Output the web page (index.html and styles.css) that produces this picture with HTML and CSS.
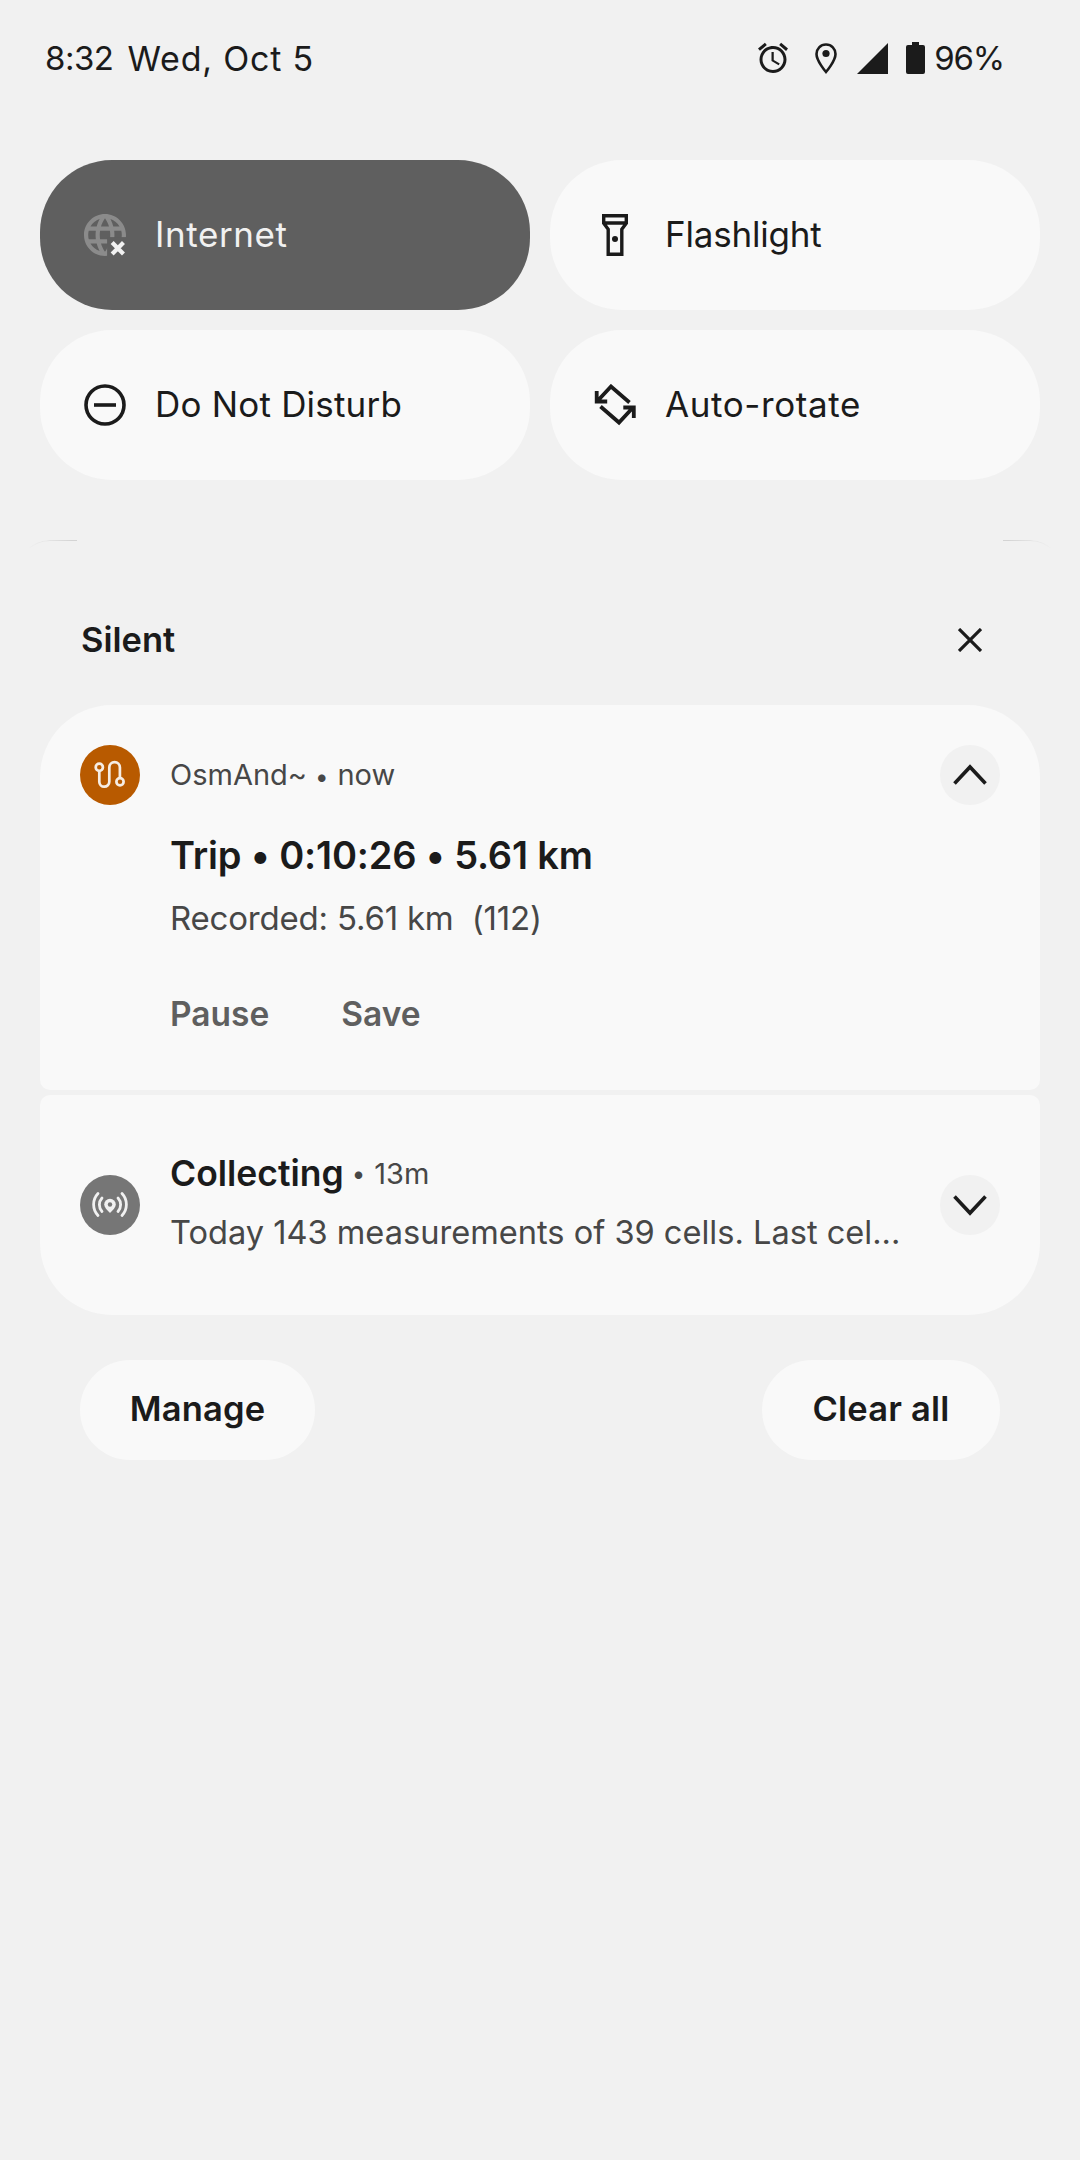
FILE: index.html
```html
<!DOCTYPE html>
<html lang="en">
<head>
    <meta charset="UTF-8">
    <meta name="viewport" content="width=device-width, initial-scale=1.0">
    <title>Notification shade</title>
    <link rel="stylesheet" href="styles.css">
</head>
<body>
    <div class="status-bar">
        <div class="status-time"><span class="status-clock">8:32</span><span class="status-date">Wed, Oct 5</span></div>
        <div class="status-icons">
            <svg class="ic-alarm" width="30" height="32" viewBox="2 1.8 20 20.4"><path fill="#1b1b1b" d="M22 5.72l-4.6-3.86-1.29 1.53 4.6 3.86L22 5.72zM7.88 3.39L6.6 1.86 2 5.71l1.29 1.53 4.59-3.85zM12.5 8H11v6l4.75 2.85.75-1.23-4-2.37V8zM12 4c-4.97 0-9 4.03-9 9s4.03 9 9 9 9-4.03 9-9-4.03-9-9-9zm0 16c-3.87 0-7-3.13-7-7s3.13-7 7-7 7 3.13 7 7-3.13 7-7 7z"/></svg>
            <svg class="ic-pin" width="22" height="31" viewBox="0 0 22 31"><path fill="none" stroke="#1b1b1b" stroke-width="2.6" d="M11 1.5C5.5 1.5 1.5 5.8 1.5 11c0 7 9.5 18 9.5 18s9.5-11 9.5-18C20.5 5.8 16.5 1.5 11 1.5z"/><circle cx="11" cy="10.5" r="3.6" fill="#1b1b1b"/></svg>
            <svg class="ic-signal" width="31" height="31" viewBox="0 0 31 31"><polygon fill="#1b1b1b" points="0,31 31,0 31,31"/></svg>
            <svg class="ic-battery" width="19" height="32" viewBox="0 0 19 32"><path fill="#1b1b1b" d="M6 0h7v3h4a2 2 0 0 1 2 2v25a2 2 0 0 1-2 2H2a2 2 0 0 1-2-2V5a2 2 0 0 1 2-2h4z"/></svg>
            <span class="status-pct">96%</span>
        </div>
    </div>

    <div class="tiles">
        <div class="tile tile-off">
            <span class="tile-icon">
                <svg width="42" height="42" viewBox="2 2 20 20"><path fill="#8b8b8b" d="M11.99 2C6.47 2 2 6.48 2 12s4.47 10 9.99 10C17.52 22 22 17.52 22 12S17.52 2 11.99 2zm6.93 6h-2.95c-.32-1.25-.78-2.45-1.38-3.56 1.84.63 3.37 1.91 4.33 3.56zM12 4.04c.83 1.2 1.48 2.53 1.91 3.96h-3.82c.43-1.43 1.08-2.76 1.91-3.96zM4.26 14C4.1 13.36 4 12.69 4 12s.1-1.36.26-2h3.38c-.08.66-.14 1.32-.14 2 0 .68.06 1.34.14 2H4.26zm.82 2h2.95c.32 1.25.78 2.45 1.38 3.56-1.84-.63-3.37-1.9-4.33-3.56zm2.95-8H5.08c.96-1.66 2.49-2.93 4.33-3.56C8.81 5.55 8.35 6.75 8.03 8zM12 19.96c-.83-1.2-1.48-2.53-1.91-3.96h3.82c-.43 1.43-1.08 2.76-1.91 3.96zM14.34 14H9.66c-.09-.66-.16-1.32-.16-2 0-.68.07-1.35.16-2h4.68c.09.65.16 1.32.16 2 0 .68-.07 1.34-.16 2zm.25 5.56c.6-1.11 1.06-2.31 1.38-3.56h2.95c-.96 1.65-2.49 2.93-4.33 3.56zM16.36 14c.08-.66.14-1.32.14-2 0-.68-.06-1.34-.14-2h3.38c.16.64.26 1.31.26 2s-.1 1.36-.26 2h-3.38z"/><rect x="13" y="13" width="9" height="9" fill="#5f5f5f"/><path fill="none" stroke="#f1f1f1" stroke-width="2" d="M15.4 15.6l5.4 5.4M20.8 15.6l-5.4 5.4"/></svg>
            </span>
            <span class="tile-label label-wide">Internet</span>
        </div>
        <div class="tile">
            <span class="tile-icon">
                <svg width="26" height="42" viewBox="0 0 26 42"><path fill="none" stroke="#1b1b1b" stroke-width="3.4" d="M1.7 1.7h22.6v7.5l-4.5 6v25.1H6.2V15.2l-4.5-6zM1.7 9h22.6"/><circle cx="13" cy="25" r="3" fill="#1b1b1b"/></svg>
            </span>
            <span class="tile-label label-tight">Flashlight</span>
        </div>
        <div class="tile">
            <span class="tile-icon">
                <svg width="42" height="42" viewBox="0 0 42 42"><circle cx="21" cy="21" r="19" fill="none" stroke="#1b1b1b" stroke-width="3.6"/><path stroke="#1b1b1b" stroke-width="3.6" d="M10 21h22"/></svg>
            </span>
            <span class="tile-label label-dnd">Do Not Disturb</span>
        </div>
        <div class="tile">
            <span class="tile-icon">
                <svg width="42" height="42" viewBox="24 25 42 42"><path fill="none" stroke="#1b1b1b" stroke-width="3.8" d="M27 42.5L41 27.5l18.5 16M30.5 47.5L49 63.5 63 48.5M26.700 32v10.500h10.500M53.300 48.500h10.500V59"/></svg>
            </span>
            <span class="tile-label label-wide">Auto-rotate</span>
        </div>
    </div>

    <div class="shade-edge"><span class="edge-left"></span><span class="edge-right"></span></div>

    <div class="section-head">
        <span class="section-title">Silent</span>
        <svg class="close-icon" width="24" height="24" viewBox="0 0 24 24"><path stroke="#1b1b1b" stroke-width="3.2" d="M1 1l22 22M23 1L1 23"/></svg>
    </div>

    <div class="card card-top">
        <div class="card-row">
            <span class="app-icon app-osmand">
                <svg width="60" height="60" viewBox="0 0 60 60"><g fill="none" stroke="#f6ede4" stroke-width="2.700"><path d="M19.300 26v10.700a5 5 0 0 0 10 0V22.500a5.300 5.300 0 0 1 10.600 0V33"/><circle cx="19.300" cy="22.300" r="3.600"/><circle cx="40" cy="36.700" r="3.600"/></g></svg>
            </span>
            <span class="app-line">OsmAnd~<i class="dot">•</i>now</span>
            <span class="expand">
                <svg width="34" height="22" viewBox="0 0 34 22"><path fill="none" stroke="#1b1b1b" stroke-width="3.600" d="M1.500 19.500L17 3l15.500 16.500"/></svg>
            </span>
        </div>
        <div class="card-body">
            <div class="trip-title">Trip • 0:10:26 • 5.61 km</div>
            <div class="trip-text">Recorded: 5.61 km&nbsp;&nbsp;(112)</div>
            <div class="actions"><span>Pause</span><span>Save</span></div>
        </div>
    </div>

    <div class="card card-bottom">
        <span class="app-icon app-cells">
            <svg width="60" height="60" viewBox="0 0 60 60"><g fill="none" stroke="#f1f1f1" stroke-width="2.800" stroke-linecap="round"><path d="M18 18.500a16 16 0 0 0 0 22M42 18.500a16 16 0 0 1 0 22M22 23a10 10 0 0 0 0 13.500M38 23a10 10 0 0 1 0 13.500"/></g><path fill="#f1f1f1" d="M30 38c-3-3-5.800-5.800-5.800-8.500a5.800 5.800 0 0 1 11.600 0c0 2.700-2.800 5.500-5.800 8.500z"/><circle cx="30" cy="29.500" r="2.200" fill="#767676"/></svg>
        </span>
        <div class="cells-text">
            <div class="cells-title"><b>Collecting</b><i class="dot">•</i><span>13m</span></div>
            <div class="cells-body">Today 143 measurements of 39 cells. Last cel...</div>
        </div>
        <span class="expand">
            <svg width="34" height="22" viewBox="0 0 34 22"><path fill="none" stroke="#1b1b1b" stroke-width="3.600" d="M1.500 2.500L17 19 32.500 2.500"/></svg>
        </span>
    </div>

    <div class="footer">
        <span class="pill pill-manage">Manage</span>
        <span class="pill pill-clear">Clear all</span>
    </div>
</body>
</html>
```

FILE: styles.css
```css
body {
    margin: 0;
    height: 2160px;
    background: #f1f1f1;
    color: #1b1b1b;
    font-family: Inter, "Noto Sans", sans-serif;
    overflow: hidden;
}
svg {
    display: block;
    flex: none;
}
i {
    font-style: normal;
}

.status-bar {
    height: 116px;
    display: flex;
    align-items: center;
    justify-content: space-between;
    padding: 0 76px 0 45px;
    font-size: 33px;
}
.status-time {
    display: flex;
    gap: 14px;
}
.status-clock {
    letter-spacing: -0.5px;
}
.status-date {
    font-size: 34px;
    letter-spacing: 0.8px;
}
.status-icons {
    display: flex;
    align-items: center;
}
.ic-pin { margin-left: 27px; }
.ic-signal { margin-left: 20px; }
.ic-battery { margin-left: 18px; }
.status-pct {
    margin-left: 9px;
    letter-spacing: -1.2px;
}

.tiles {
    display: grid;
    grid-template-columns: 490px 490px;
    grid-auto-rows: 150px;
    gap: 20px;
    margin: 44px 40px 0;
}
.tile {
    display: flex;
    align-items: center;
    background: #f9f9f9;
    border-radius: 72px;
    font-size: 35px;
}
.tile-off {
    background: #5f5f5f;
    color: #f1f1f1;
}
.tile-icon {
    width: 50px;
    margin: 0 25px 0 40px;
    display: flex;
    justify-content: center;
}
.tile-label {
    padding-bottom: 2px;
}
.label-wide {
    letter-spacing: 0.6px;
}
.label-tight {
    letter-spacing: -0.2px;
}
.label-dnd {
    letter-spacing: 0.2px;
}

.shade-edge {
    display: flex;
    justify-content: space-between;
    height: 33px;
    margin-top: 60px;
    padding: 0 17px;
}
.edge-left, .edge-right {
    width: 60px;
    height: 33px;
    box-sizing: border-box;
    border-top: 1px solid #d4d4d4;
}
.edge-left {
    border-left: 1px solid #d4d4d4;
    border-top-left-radius: 60px;
    -webkit-mask-image: linear-gradient(to right, transparent 20%, #000 90%);
    mask-image: linear-gradient(to right, transparent 20%, #000 90%);
}
.edge-right {
    border-right: 1px solid #d4d4d4;
    border-top-right-radius: 60px;
    -webkit-mask-image: linear-gradient(to left, transparent 20%, #000 90%);
    mask-image: linear-gradient(to left, transparent 20%, #000 90%);
}

.section-head {
    height: 132px;
    box-sizing: border-box;
    padding: 0 98px 0 81px;
    display: flex;
    align-items: center;
    justify-content: space-between;
}
.section-title {
    font-size: 34.5px;
    font-weight: 600;
}
.close-icon {
    margin-top: 2px;
}

.card {
    margin: 0 40px;
    background: #f9f9f9;
}
.card-top {
    height: 385px;
    box-sizing: border-box;
    padding: 40px 40px 0;
    border-radius: 72px 72px 10px 10px;
}
.card-row {
    display: flex;
    align-items: center;
}
.app-icon {
    width: 60px;
    height: 60px;
    border-radius: 50%;
    flex: none;
}
.app-osmand { background: #b85a00; }
.app-cells { background: #767676; }
.app-line {
    margin-left: 30px;
    padding-bottom: 2px;
    flex: 1;
    font-size: 29px;
    color: #474747;
}
.dot {
    margin: 0 9px 0 8px;
    font-size: 24px;
}
.expand {
    width: 60px;
    height: 60px;
    border-radius: 50%;
    background: #f1f1f1;
    display: flex;
    align-items: center;
    justify-content: center;
    flex: none;
}
.card-body {
    padding-left: 90px;
}
.trip-title {
    margin-top: 25px;
    font-size: 38px;
    line-height: 50px;
    font-weight: 600;
    letter-spacing: -0.17px;
}
.trip-text {
    margin-top: 15px;
    font-size: 33px;
    line-height: 46px;
    color: #474747;
    letter-spacing: -0.2px;
}
.actions {
    margin-top: 53px;
    display: flex;
    gap: 72px;
    font-size: 33.5px;
    line-height: 40px;
    font-weight: 600;
    color: #5f5f5f;
}

.card-bottom {
    height: 220px;
    margin-top: 5px;
    box-sizing: border-box;
    padding: 0 40px;
    display: flex;
    align-items: center;
    border-radius: 10px 10px 72px 72px;
}
.cells-text {
    flex: 1;
    margin-left: 30px;
    padding-bottom: 4px;
}
.cells-title {
    display: flex;
    align-items: center;
    line-height: 46px;
    font-size: 29px;
    color: #474747;
}
.cells-title b {
    font-size: 35.5px;
    font-weight: 600;
    color: #1b1b1b;
}
.cells-body {
    margin-top: 12px;
    font-size: 32.6px;
    line-height: 46px;
    color: #474747;
}

.footer {
    display: flex;
    justify-content: space-between;
    margin: 45px 80px 0;
}
.pill {
    height: 100px;
    box-sizing: border-box;
    padding-bottom: 4px;
    display: flex;
    align-items: center;
    justify-content: center;
    border-radius: 50px;
    background: #f9f9f9;
    font-size: 34.5px;
    font-weight: 600;
    letter-spacing: 0.2px;
}
.pill-manage { width: 235px; }
.pill-clear { width: 238px; }
```
